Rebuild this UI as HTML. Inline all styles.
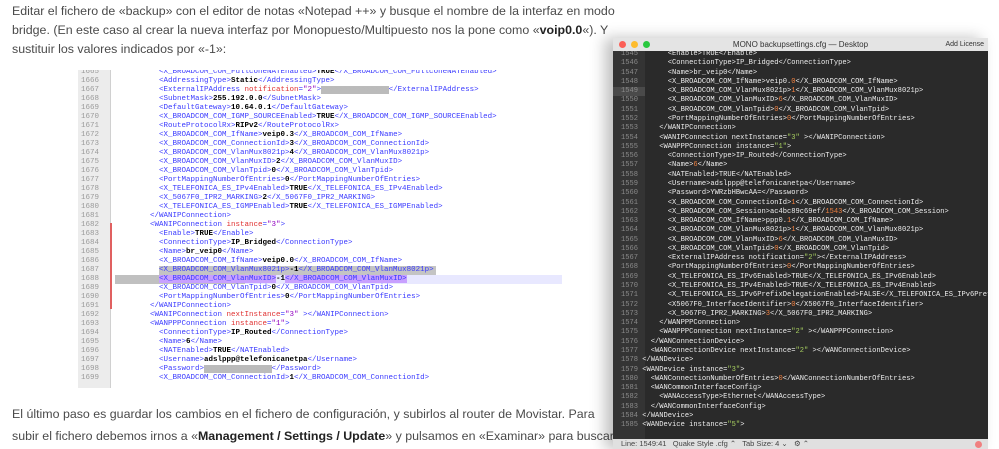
<!DOCTYPE html>
<html><head><meta charset="utf-8"><style>
*{margin:0;padding:0;box-sizing:border-box}
body{width:999px;height:449px;overflow:hidden;background:#fff;position:relative;font-family:"Liberation Sans",sans-serif}
.p{position:absolute;left:12px;font-size:12.4px;color:#4a4a4a;line-height:19.5px;white-space:nowrap}
.np{position:absolute;left:78px;top:70px;width:484px;height:318px;background:#fff;overflow:hidden}
.np .g{position:absolute;left:0;top:0;width:32px;height:100%;background:#ececec}
.np .g2{position:absolute;left:32px;top:0;width:1px;height:100%;background:#d0d0d0}
.ln{position:absolute;font-family:"Liberation Mono",monospace;white-space:pre}
.np .ln{font-size:7.5px;line-height:9px}
.np .nums{left:3px;top:-2px;color:#9a9a9a}
.np .code{left:72px;top:-2px;color:#3a3aff}
.np b{color:#000}
.np i{font-style:normal;color:#e03030}
.np u{text-decoration:none;color:#9000c0}
.win{position:absolute;left:613px;top:38px;width:375px;height:411px;background:#2a2a2a;box-shadow:-8px 0 14px rgba(0,0,0,.25);z-index:2;overflow:hidden}
.tb{position:absolute;left:0;top:0;width:100%;height:13px;background:#e4e4e4;font-size:8px;color:#333;text-align:center;line-height:13px;z-index:3}
.dot{position:absolute;top:3px;width:7px;height:7px;border-radius:50%}
.wg{position:absolute;left:0;top:13px;width:32px;height:388px;background:#343434}
.win .ln{font-size:7.1px;line-height:9.28px}
.win .nums{left:8px;top:12px;color:#8a8a8a}
.win .code{left:25px;top:12px;color:#ececec}
.win o{color:#f08040}.win s{text-decoration:none;color:#a8d060}
.sb{position:absolute;left:0;bottom:0;width:100%;height:10px;background:#e0e0e0;font-size:7.5px;color:#444;line-height:10px;padding-left:8px;white-space:pre;z-index:3}
</style></head><body>
<div class="p" style="top:2px">Editar el fichero de «backup» con el editor de notas «Notepad ++» y busque el nombre de la interfaz en modo</div>
<div class="p" style="top:21px">bridge. (En este caso al crear la nueva interfaz por Monopuesto/Multipuesto nos la pone como «<b style="color:#222">voip0.0</b>«). Y</div>
<div class="p" style="top:40px">sustituir los valores indicados por «-1»:</div>

<div class="np"><div class="g"></div><div class="g2"></div>
<div style="position:absolute;left:37px;top:205px;width:447px;height:9px;background:#e8e8ff"></div>
<div style="position:absolute;left:37px;top:205px;width:130px;height:9px;background:#c0c0c0"></div>
<div style="position:absolute;left:81px;top:196px;width:277px;height:9px;background:#c4c4c4"></div>
<div style="position:absolute;left:32px;top:153px;width:2px;height:86px;background:#e06060"></div>
<div class="ln nums">1665
1666
1667
1668
1669
1670
1671
1672
1673
1674
1675
1676
1677
1678
1679
1680
1681
1682
1683
1684
1685
1686
1687
1688
1689
1690
1691
1692
1693
1694
1695
1696
1697
1698
1699</div>
<div class="ln code">  &lt;X_BROADCOM_COM_FullconeNATEnabled&gt;<b>TRUE</b>&lt;/X_BROADCOM_COM_FullconeNATEnabled&gt;
  &lt;AddressingType&gt;<b>Static</b>&lt;/AddressingType&gt;
  &lt;ExternalIPAddress <i>notification</i>=<u>"2"</u>&gt;<span style="background:#bbb;color:#bbb">xxxxxxxxxxxxxxx</span>&lt;/ExternalIPAddress&gt;
  &lt;SubnetMask&gt;<b>255.192.0.0</b>&lt;/SubnetMask&gt;
  &lt;DefaultGateway&gt;<b>10.64.0.1</b>&lt;/DefaultGateway&gt;
  &lt;X_BROADCOM_COM_IGMP_SOURCEEnabled&gt;<b>TRUE</b>&lt;/X_BROADCOM_COM_IGMP_SOURCEEnabled&gt;
  &lt;RouteProtocolRx&gt;<b>RIPv2</b>&lt;/RouteProtocolRx&gt;
  &lt;X_BROADCOM_COM_IfName&gt;<b>veip0.3</b>&lt;/X_BROADCOM_COM_IfName&gt;
  &lt;X_BROADCOM_COM_ConnectionId&gt;<b>3</b>&lt;/X_BROADCOM_COM_ConnectionId&gt;
  &lt;X_BROADCOM_COM_VlanMux8021p&gt;<b>4</b>&lt;/X_BROADCOM_COM_VlanMux8021p&gt;
  &lt;X_BROADCOM_COM_VlanMuxID&gt;<b>2</b>&lt;/X_BROADCOM_COM_VlanMuxID&gt;
  &lt;X_BROADCOM_COM_VlanTpid&gt;<b>0</b>&lt;/X_BROADCOM_COM_VlanTpid&gt;
  &lt;PortMappingNumberOfEntries&gt;<b>0</b>&lt;/PortMappingNumberOfEntries&gt;
  &lt;X_TELEFONICA_ES_IPv4Enabled&gt;<b>TRUE</b>&lt;/X_TELEFONICA_ES_IPv4Enabled&gt;
  &lt;X_5067F0_IPR2_MARKING&gt;<b>2</b>&lt;/X_5067F0_IPR2_MARKING&gt;
  &lt;X_TELEFONICA_ES_IGMPEnabled&gt;<b>TRUE</b>&lt;/X_TELEFONICA_ES_IGMPEnabled&gt;
&lt;/WANIPConnection&gt;
&lt;WANIPConnection <i>instance</i>=<u>"3"</u>&gt;
  &lt;Enable&gt;<b>TRUE</b>&lt;/Enable&gt;
  &lt;ConnectionType&gt;<b>IP_Bridged</b>&lt;/ConnectionType&gt;
  &lt;Name&gt;<b>br_veip0</b>&lt;/Name&gt;
  &lt;X_BROADCOM_COM_IfName&gt;<b>veip0.0</b>&lt;/X_BROADCOM_COM_IfName&gt;
  &lt;X_BROADCOM_COM_VlanMux8021p&gt;<b>-1</b>&lt;/X_BROADCOM_COM_VlanMux8021p&gt;
  <span style="background:#c8a0ff">&lt;X_BROADCOM_COM_VlanMuxID&gt;</span><b>-1</b><span style="background:#c8a0ff">&lt;/X_BROADCOM_COM_VlanMuxID&gt;</span>
  &lt;X_BROADCOM_COM_VlanTpid&gt;<b>0</b>&lt;/X_BROADCOM_COM_VlanTpid&gt;
  &lt;PortMappingNumberOfEntries&gt;<b>0</b>&lt;/PortMappingNumberOfEntries&gt;
&lt;/WANIPConnection&gt;
&lt;WANIPConnection <i>nextInstance</i>=<u>"3"</u> &gt;&lt;/WANIPConnection&gt;
&lt;WANPPPConnection <i>instance</i>=<u>"1"</u>&gt;
  &lt;ConnectionType&gt;<b>IP_Routed</b>&lt;/ConnectionType&gt;
  &lt;Name&gt;<b>6</b>&lt;/Name&gt;
  &lt;NATEnabled&gt;<b>TRUE</b>&lt;/NATEnabled&gt;
  &lt;Username&gt;<b>adslppp@telefonicanetpa</b>&lt;/Username&gt;
  &lt;Password&gt;<span style="background:#bbb;color:#bbb">xxxxxxxxxxxxxxx</span>&lt;/Password&gt;
  &lt;X_BROADCOM_COM_ConnectionId&gt;<b>1</b>&lt;/X_BROADCOM_COM_ConnectionId&gt;</div>
</div>

<div class="p" style="top:405px">El último paso es guardar los cambios en el fichero de configuración, y subirlos al router de Movistar. Para</div>
<div class="p" style="top:427px">subir el fichero debemos irnos a «<b style="color:#222">Management / Settings / Update</b>» y pulsamos en «Examinar» para buscar</div>

<div class="win">
<div class="tb"><span class="dot" style="left:6px;background:#fc5f57"></span><span class="dot" style="left:18px;background:#fdbc2e"></span><span class="dot" style="left:30px;background:#29c83f"></span>MONO backupsettings.cfg — Desktop<span style="position:absolute;right:4px;font-size:7px">Add License</span></div>
<div class="wg"></div>
<div style="position:absolute;left:0;top:49px;width:32px;height:9px;background:#4a4a4a"></div>
<div class="ln nums">1545
1546
1547
1548
1549
1550
1551
1552
1553
1554
1555
1556
1557
1558
1559
1560
1561
1562
1563
1564
1565
1566
1567
1568
1569
1570
1571
1572
1573
1574
1575
1576
1577
1578
1579
1580
1581
1582
1583
1584
1585</div>
<div class="ln code">       &lt;Enable&gt;TRUE&lt;/Enable&gt;
       &lt;ConnectionType&gt;IP_Bridged&lt;/ConnectionType&gt;
       &lt;Name&gt;br_veip0&lt;/Name&gt;
       &lt;X_BROADCOM_COM_IfName&gt;veip0.<o>0</o>&lt;/X_BROADCOM_COM_IfName&gt;
       &lt;X_BROADCOM_COM_VlanMux8021p&gt;<o>1</o>&lt;/X_BROADCOM_COM_VlanMux8021p&gt;
       &lt;X_BROADCOM_COM_VlanMuxID&gt;<o>6</o>&lt;/X_BROADCOM_COM_VlanMuxID&gt;
       &lt;X_BROADCOM_COM_VlanTpid&gt;<o>0</o>&lt;/X_BROADCOM_COM_VlanTpid&gt;
       &lt;PortMappingNumberOfEntries&gt;<o>0</o>&lt;/PortMappingNumberOfEntries&gt;
     &lt;/WANIPConnection&gt;
     &lt;WANIPConnection nextInstance=<s>"3"</s> &gt;&lt;/WANIPConnection&gt;
     &lt;WANPPPConnection instance=<s>"1"</s>&gt;
       &lt;ConnectionType&gt;IP_Routed&lt;/ConnectionType&gt;
       &lt;Name&gt;<o>6</o>&lt;/Name&gt;
       &lt;NATEnabled&gt;TRUE&lt;/NATEnabled&gt;
       &lt;Username&gt;adslppp@telefonicanetpa&lt;/Username&gt;
       &lt;Password&gt;YWRzbHBwcAA=&lt;/Password&gt;
       &lt;X_BROADCOM_COM_ConnectionId&gt;<o>1</o>&lt;/X_BROADCOM_COM_ConnectionId&gt;
       &lt;X_BROADCOM_COM_Session&gt;ac4bc89c69ef/<o>1543</o>&lt;/X_BROADCOM_COM_Session&gt;
       &lt;X_BROADCOM_COM_IfName&gt;ppp0.<o>1</o>&lt;/X_BROADCOM_COM_IfName&gt;
       &lt;X_BROADCOM_COM_VlanMux8021p&gt;<o>1</o>&lt;/X_BROADCOM_COM_VlanMux8021p&gt;
       &lt;X_BROADCOM_COM_VlanMuxID&gt;<o>6</o>&lt;/X_BROADCOM_COM_VlanMuxID&gt;
       &lt;X_BROADCOM_COM_VlanTpid&gt;<o>0</o>&lt;/X_BROADCOM_COM_VlanTpid&gt;
       &lt;ExternalIPAddress notification=<s>"2"</s>&gt;&lt;/ExternalIPAddress&gt;
       &lt;PortMappingNumberOfEntries&gt;<o>0</o>&lt;/PortMappingNumberOfEntries&gt;
       &lt;X_TELEFONICA_ES_IPv6Enabled&gt;TRUE&lt;/X_TELEFONICA_ES_IPv6Enabled&gt;
       &lt;X_TELEFONICA_ES_IPv4Enabled&gt;TRUE&lt;/X_TELEFONICA_ES_IPv4Enabled&gt;
       &lt;X_TELEFONICA_ES_IPv6PrefixDelegationEnabled&gt;FALSE&lt;/X_TELEFONICA_ES_IPv6Pref
       &lt;X5067F0_InterfaceIdentifier&gt;<o>0</o>&lt;/X5067F0_InterfaceIdentifier&gt;
       &lt;X_5067F0_IPR2_MARKING&gt;<o>3</o>&lt;/X_5067F0_IPR2_MARKING&gt;
     &lt;/WANPPPConnection&gt;
     &lt;WANPPPConnection nextInstance=<s>"2"</s> &gt;&lt;/WANPPPConnection&gt;
   &lt;/WANConnectionDevice&gt;
   &lt;WANConnectionDevice nextInstance=<s>"2"</s> &gt;&lt;/WANConnectionDevice&gt;
 &lt;/WANDevice&gt;
 &lt;WANDevice instance=<s>"3"</s>&gt;
   &lt;WANConnectionNumberOfEntries&gt;<o>0</o>&lt;/WANConnectionNumberOfEntries&gt;
   &lt;WANCommonInterfaceConfig&gt;
     &lt;WANAccessType&gt;Ethernet&lt;/WANAccessType&gt;
   &lt;/WANCommonInterfaceConfig&gt;
 &lt;/WANDevice&gt;
 &lt;WANDevice instance=<s>"5"</s>&gt;</div>
<div class="sb">Line: 1549:41   Quake Style .cfg ⌃   Tab Size: 4 ⌄   ⚙ ⌃<span style="position:absolute;right:6px;top:2px;width:7px;height:7px;border-radius:50%;background:#f08080"></span></div>
</div>
</body></html>
